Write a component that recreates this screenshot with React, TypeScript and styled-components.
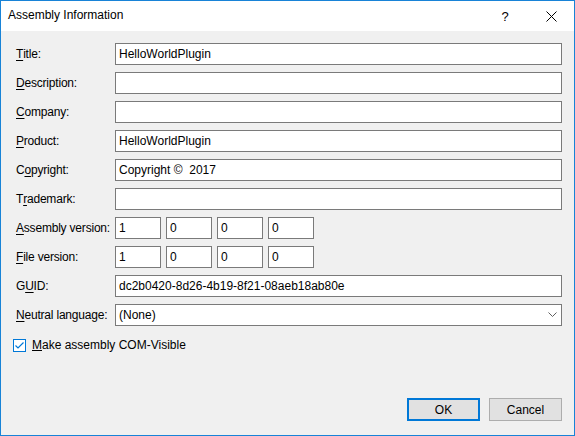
import React from 'react'
import styled, { createGlobalStyle } from 'styled-components'

const GlobalStyle = createGlobalStyle`
    html, body {
        margin: 0;
        padding: 0;
        background: #f0f0f0;
    }
    * {
        box-sizing: border-box;
    }
`

const Window = styled.div`
    width: 575px;
    height: 436px;
    border: 1px solid #1883d7;
    background: #f0f0f0;
    display: flex;
    flex-direction: column;
    font-family: 'Segoe UI', 'Liberation Sans', Arial, sans-serif;
    font-size: 12px;
    color: #000;
`

const TitleBar = styled.div`
    height: 30px;
    background: #fff;
    display: flex;
    align-items: center;
    padding-left: 7px;
    flex-shrink: 0;
`

const Caption = styled.div`
    flex: 1;
    font-size: 12px;
    padding-bottom: 2px;
`

const CaptionButton = styled.div`
    width: 46px;
    height: 30px;
    display: flex;
    align-items: center;
    justify-content: center;
    font-size: 13px;
`

const Body = styled.div`
    flex: 1;
    display: flex;
    flex-direction: column;
    padding: 12px 12px 14px 15px;
`

const Form = styled.div`
    display: grid;
    grid-template-columns: 99px 1fr;
    grid-auto-rows: 22px;
    row-gap: 7px;
`

const Label = styled.label`
    display: flex;
    align-items: center;
    white-space: nowrap;
    letter-spacing: -0.2px;
    padding-bottom: 1px;

    u {
        text-decoration: underline;
        text-underline-offset: 2px;
    }
`

const TextBox = styled.div`
    height: 22px;
    background: #fff;
    border: 1px solid #7a7a7a;
    display: flex;
    align-items: center;
    padding: 0 3px 1px;
    white-space: nowrap;
`

const Versions = styled.div`
    display: flex;
    gap: 5px;
`

const VersionBox = styled(TextBox)`
    width: 46px;
`

const Combo = styled(TextBox)`
    justify-content: space-between;
    padding-right: 4px;
`

const CheckRow = styled.div`
    display: flex;
    align-items: center;
    gap: 6px;
    margin-top: 12px;
    margin-left: -3px;
`

const CheckBox = styled.span`
    width: 13px;
    height: 13px;
    border: 1px solid #0078d7;
    background: #fff;
    display: flex;
    align-items: center;
    justify-content: center;
`

const Spacer = styled.div`
    flex: 1;
`

const ButtonRow = styled.div`
    display: flex;
    justify-content: flex-end;
    gap: 9px;
`

const Button = styled.button<{ $default?: boolean }>`
    width: 73px;
    height: 23px;
    font-family: inherit;
    font-size: 12px;
    color: #000;
    background: #e1e1e1;
    border: ${p => (p.$default ? '2px solid #0078d7' : '1px solid #adadad')};
    padding: 0;
`

const field = (label: React.ReactNode, value = '') => (
    <>
        <Label>{label}</Label>
        <TextBox>{value}</TextBox>
    </>
)

const versions = (label: React.ReactNode) => (
    <>
        <Label>{label}</Label>
        <Versions>
            {['1', '0', '0', '0'].map((v, i) => (
                <VersionBox key={i}>{v}</VersionBox>
            ))}
        </Versions>
    </>
)

const App = () => (
    <>
        <GlobalStyle />
        <Window>
            <TitleBar>
                <Caption>Assembly Information</Caption>
                <CaptionButton>?</CaptionButton>
                <CaptionButton>
                    <svg width="11" height="11" viewBox="0 0 11 11">
                        <path d="M0.5 0.5 L10.5 10.5 M10.5 0.5 L0.5 10.5" stroke="#000" strokeWidth="1" />
                    </svg>
                </CaptionButton>
            </TitleBar>
            <Body>
                <Form>
                    {field(<><u>T</u>itle:</>, 'HelloWorldPlugin')}
                    {field(<><u>D</u>escription:</>)}
                    {field(<><u>C</u>ompany:</>)}
                    {field(<><u>P</u>roduct:</>, 'HelloWorldPlugin')}
                    {field(<>C<u>o</u>pyright:</>, 'Copyright \u00a9\u00a0 2017')}
                    {field(<>T<u>r</u>ademark:</>)}
                    {versions(<><u>A</u>ssembly version:</>)}
                    {versions(<><u>F</u>ile version:</>)}
                    {field(<>G<u>U</u>ID:</>, 'dc2b0420-8d26-4b19-8f21-08aeb18ab80e')}
                    <Label><u>N</u>eutral language:</Label>
                    <Combo>
                        (None)
                        <svg width="9" height="5" viewBox="0 0 9 5">
                            <path d="M0.5 0.5 L4.5 4.5 L8.5 0.5" fill="none" stroke="#606060" strokeWidth="1" />
                        </svg>
                    </Combo>
                </Form>
                <CheckRow>
                    <CheckBox>
                        <svg width="11" height="11" viewBox="0 0 11 11">
                            <path d="M1.5 5.5 L4 8 L9.5 2.5" fill="none" stroke="#0078d7" strokeWidth="1.2" />
                        </svg>
                    </CheckBox>
                    <span><u>M</u>ake assembly COM-Visible</span>
                </CheckRow>
                <Spacer />
                <ButtonRow>
                    <Button $default>OK</Button>
                    <Button>Cancel</Button>
                </ButtonRow>
            </Body>
        </Window>
    </>
)

export default App
